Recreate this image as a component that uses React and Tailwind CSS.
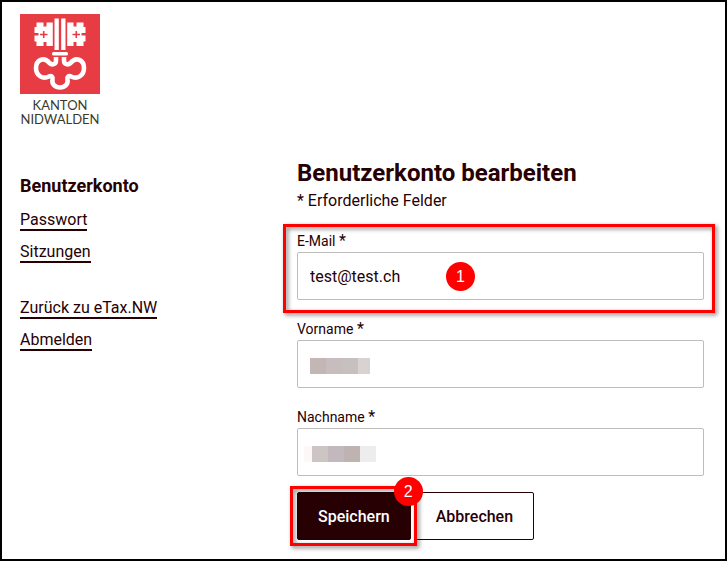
const links = [
  ["Passwort", "Sitzungen"],
  ["Zurück zu eTax.NW", "Abmelden"],
];

// left half of the key, the right half is the same thing mirrored
function KeyHalf({ transform }) {
  return (
    <g transform={transform}>
      <rect x="34.500" y="4.500" width="4.300" height="31.500" fill="#fff" />
      <path
        d="M16.500 8.500h7v4h3v-4h6.300v23.500h-6.300v-4h-3v4h-7v-4.500h-2v-6h4v-2.500h-4v-6h2z"
        fill="#fff"
      />
      <path d="M23.700 17v7M20 20.500h7.500" fill="none" stroke="#e73c43" strokeWidth="1.600" />
      <path
        d="M36 43v3.500c0 4-4 5-6.500 2.500C24 42 16 46 16 54c0 8 7 11.500 13 8.500 2.500-1 4 0 3.500 3C31.500 70 35 73.500 40 73.500"
        fill="none"
        stroke="#fff"
        strokeWidth="4.600"
      />
    </g>
  );
}

function Logo() {
  return (
    <div className="w-20">
      <svg viewBox="0 0 80 80" className="block size-20" aria-hidden="true">
        <rect width="80" height="80" fill="#e73c43" />
        <KeyHalf />
        <KeyHalf transform="translate(80 0) scale(-1 1)" />
        <rect x="32" y="38" width="16" height="3.500" rx="1.500" fill="#fff" />
      </svg>
      <p className="mt-1 text-center font-['Lato',sans-serif] text-[13px] leading-[14px] text-[#3b3a26]">
        KANTON
        <br />
        NIDWALDEN
      </p>
    </div>
  );
}

function Badge({ children, className }) {
  return (
    <span
      className={`absolute flex size-[29px] items-center justify-center rounded-full bg-[#ff0000] font-['Liberation_Sans',sans-serif] text-base text-white ${className}`}
    >
      {children}
    </span>
  );
}

function Highlight({ className }) {
  return (
    <span
      className={`pointer-events-none absolute border-3 border-[#ff0000] drop-shadow-[2px_2px_2px_rgba(0,0,0,0.5)] ${className}`}
    />
  );
}

function Field({ id, label, type = "text", value, children }) {
  return (
    <div>
      <label htmlFor={id} className="block pb-0.5 text-sm leading-[18px]">
        {label} <span className="text-base leading-[18px]">*</span>
      </label>
      <div className="relative">
        <input
          id={id}
          type={type}
          defaultValue={value}
          required
          className="block h-12 w-full rounded-xs border border-[#bfbcbc] px-3 text-base outline-none"
        />
        {children}
      </div>
    </div>
  );
}

export default function App() {
  return (
    <div className="min-h-screen border-2 border-black bg-white px-[18px] pt-3 pb-[17px] font-['Roboto',sans-serif] text-base text-[#260003]">
      <Logo />
      <div className="mt-[31px] flex">
        <nav className="w-[277px] shrink-0 pt-[15px]">
          <h2 className="text-lg leading-7 font-bold">Benutzerkonto</h2>
          <div className="mt-2.5 flex flex-col gap-[35px]">
            {links.map((group, i) => (
              <ul key={i} className="flex flex-col items-start gap-[11px]">
                {group.map((name) => (
                  <li key={name} className="flex">
                    <a href="#" className="border-b-2 border-[#260003] pt-px leading-[18px]">
                      {name}
                    </a>
                  </li>
                ))}
              </ul>
            ))}
          </div>
        </nav>

        <main className="min-w-0 flex-1 pr-[3px]">
          <h1 className="text-2xl leading-8 font-bold">Benutzerkonto bearbeiten</h1>
          <p className="leading-6">* Erforderliche Felder</p>

          <form className="mt-[19px]" onSubmit={(e) => e.preventDefault()}>
            <div className="flex flex-col gap-5">
              <div className="relative">
                <Field id="email" label="E-Mail" type="email" value="test@test.ch">
                  <Badge className="top-[10px] left-[149px]">1</Badge>
                </Field>
                <Highlight className="-top-2 -right-[11px] -bottom-[13px] -left-[14px]" />
              </div>
              <Field id="vorname" label="Vorname">
                <span className="absolute top-[18px] left-[13px] flex h-4">
                  <i className="w-4 bg-[#c3b6b5]" />
                  <i className="w-4 bg-[#c7bcbe]" />
                  <i className="w-4 bg-[#c6c0c1]" />
                  <i className="w-3 bg-[#d9d2d3]" />
                </span>
              </Field>
              <Field id="nachname" label="Nachname">
                <span className="absolute top-[18px] left-[7px] flex h-4">
                  <i className="w-2 bg-[#fcf8f6]" />
                  <i className="w-4 bg-[#cdc4c4]" />
                  <i className="w-4 bg-[#c2b8be]" />
                  <i className="w-4 bg-[#bfb3b2]" />
                  <i className="w-4 bg-[#ededed]" />
                </span>
              </Field>
            </div>

            <div className="mt-4 flex gap-1 font-medium">
              <div className="relative z-10">
                <button type="submit" className="h-12 rounded-xs border border-[#260003] bg-[#260003] px-5 pt-0.5 text-white">
                  Speichern
                </button>
                <Highlight className="-inset-y-1.5 -right-1.5 -left-[7px]" />
                <Badge className="-top-[15px] -right-3 font-normal">2</Badge>
              </div>
              <button type="button" className="h-12 rounded-xs border border-[#260003] px-5 pt-0.5">
                Abbrechen
              </button>
            </div>
          </form>
        </main>
      </div>
    </div>
  );
}
